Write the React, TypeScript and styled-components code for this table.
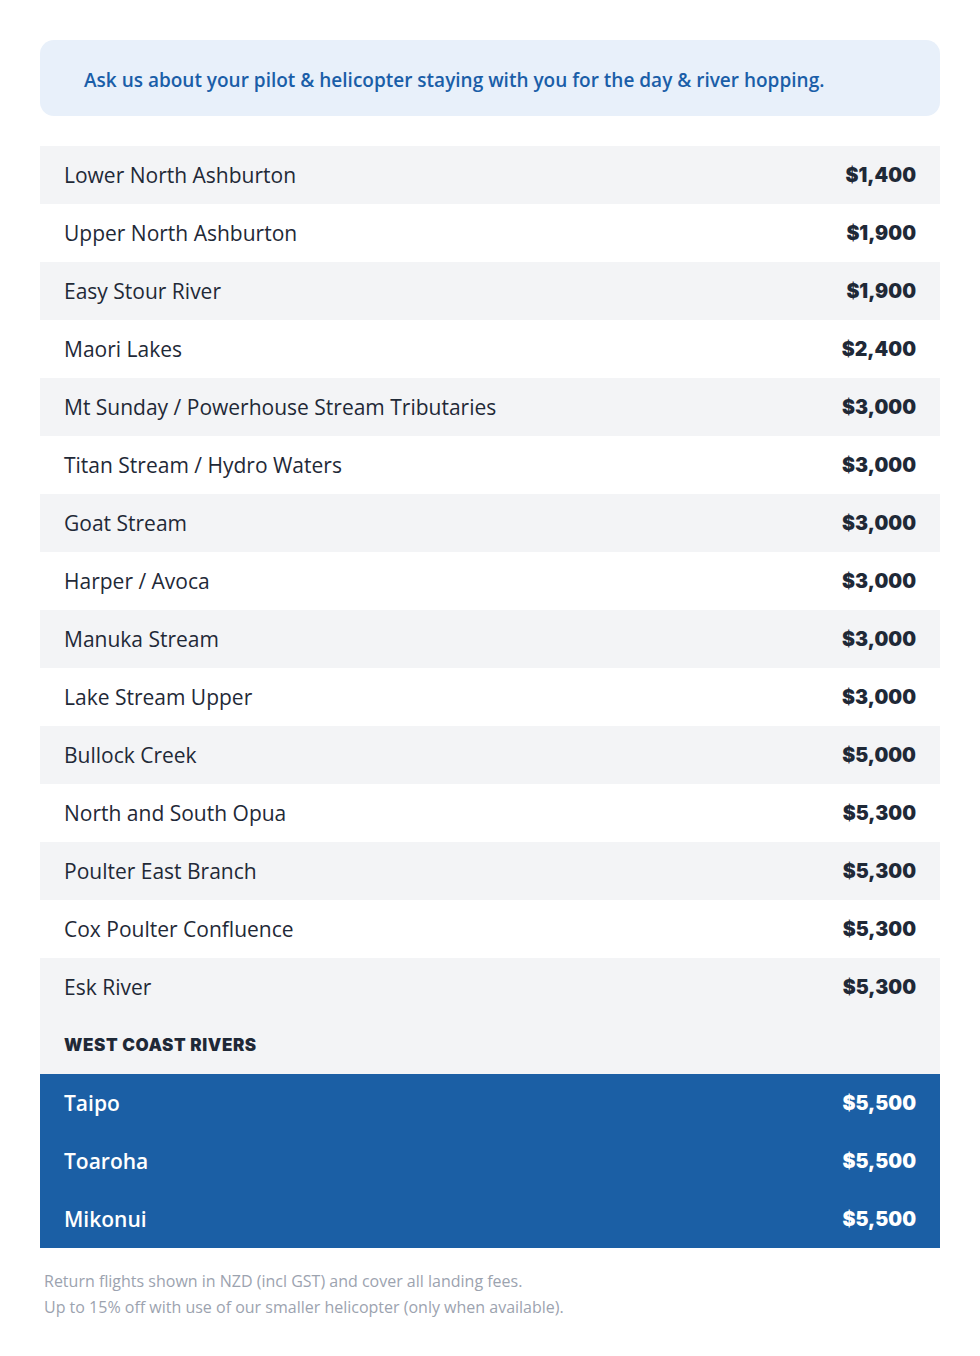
import React from "react";
import styled, { createGlobalStyle } from "styled-components";

const GlobalStyle = createGlobalStyle`
    body {
        margin: 0;
        background: #ffffff;
        font-family: "Open Sans", "Liberation Sans", sans-serif;
    }
`;

const Page = styled.div`
    padding: 40px 40px 36px;
    display: flex;
    flex-direction: column;
`;

const Banner = styled.div`
    background-color: #e8f0fa;
    border-radius: 14px;
    padding: 3px 44px 0;
    height: 76px;
    box-sizing: border-box;
    display: flex;
    align-items: center;
    color: #1a5ea8;
    font-size: 19px;
    font-weight: 600;
`;

const Table = styled.div`
    margin-top: 30px;
    display: flex;
    flex-direction: column;
`;

const Row = styled.div<{ $tone: "gray" | "white" | "blue" }>`
    height: 58px;
    display: flex;
    align-items: center;
    justify-content: space-between;
    padding: 0 24px;
    background-color: ${(p) =>
        p.$tone === "gray"
            ? "#f3f4f6"
            : p.$tone === "blue"
            ? "#1b5fa5"
            : "#ffffff"};
    color: ${(p) => (p.$tone === "blue" ? "#ffffff" : "#1f2937")};
`;

const Name = styled.div<{ $strong?: boolean }>`
    font-size: 21px;
    font-weight: ${(p) => (p.$strong ? 600 : 400)};
`;

const Price = styled.div`
    font-family: "Inter", "Liberation Sans", sans-serif;
    font-size: 19.5px;
    font-weight: 900;
    letter-spacing: 0;
`;

const Heading = styled.div`
    font-family: "Inter", "Liberation Sans", sans-serif;
    font-size: 17px;
    font-weight: 900;
    text-transform: uppercase;
    color: #1f2937;
    letter-spacing: 0.6px;
`;

const Notes = styled.div`
    margin-top: 20px;
    padding-left: 4px;
    color: #9ca3af;
    font-size: 16px;
    line-height: 26px;
`;

const eastRivers: [string, string][] = [
    ["Lower North Ashburton", "$1,400"],
    ["Upper North Ashburton", "$1,900"],
    ["Easy Stour River", "$1,900"],
    ["Maori Lakes", "$2,400"],
    ["Mt Sunday / Powerhouse Stream Tributaries", "$3,000"],
    ["Titan Stream / Hydro Waters", "$3,000"],
    ["Goat Stream", "$3,000"],
    ["Harper / Avoca", "$3,000"],
    ["Manuka Stream", "$3,000"],
    ["Lake Stream Upper", "$3,000"],
    ["Bullock Creek", "$5,000"],
    ["North and South Opua", "$5,300"],
    ["Poulter East Branch", "$5,300"],
    ["Cox Poulter Confluence", "$5,300"],
    ["Esk River", "$5,300"],
];

const westRivers: [string, string][] = [
    ["Taipo", "$5,500"],
    ["Toaroha", "$5,500"],
    ["Mikonui", "$5,500"],
];

const App: React.FC = () => {
    return (
        <>
            <GlobalStyle />
            <Page>
                <Banner>
                    Ask us about your pilot &amp; helicopter staying with you
                    for the day &amp; river hopping.
                </Banner>

                <Table>
                    {eastRivers.map(([name, price], i) => (
                        <Row key={name} $tone={i % 2 === 0 ? "gray" : "white"}>
                            <Name>{name}</Name>
                            <Price>{price}</Price>
                        </Row>
                    ))}
                    <Row $tone="gray">
                        <Heading>West Coast Rivers</Heading>
                    </Row>
                    {westRivers.map(([name, price]) => (
                        <Row key={name} $tone="blue">
                            <Name $strong>{name}</Name>
                            <Price>{price}</Price>
                        </Row>
                    ))}
                </Table>

                <Notes>
                    Return flights shown in NZD (incl GST) and cover all landing
                    fees.
                    <br />
                    Up to 15% off with use of our smaller helicopter (only when
                    available).
                </Notes>
            </Page>
        </>
    );
};

export default App;
